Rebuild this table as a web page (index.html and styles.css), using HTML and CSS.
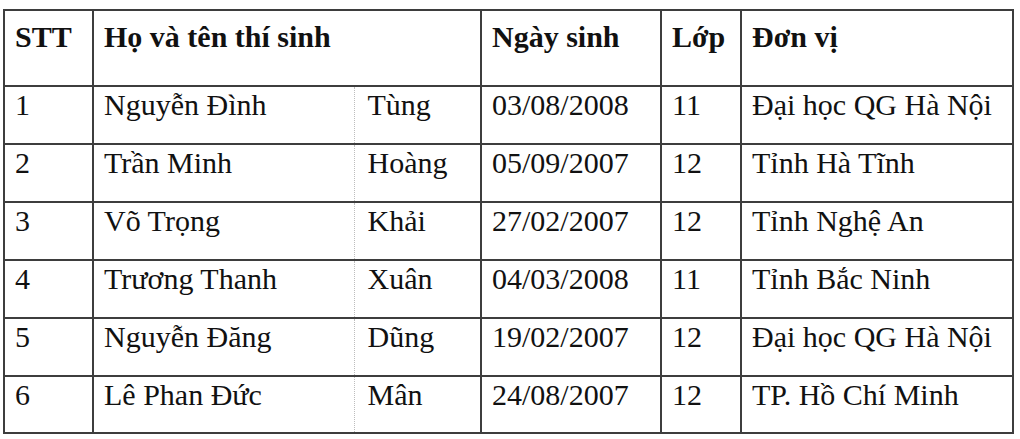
FILE: index.html
```html
<!DOCTYPE html>
<html lang="vi">
<head>
<meta charset="utf-8">
<title>Danh sách thí sinh</title>
<link rel="stylesheet" href="styles.css">
</head>
<body>
<table class="list">
  <colgroup>
    <col class="c-stt">
    <col class="c-ho">
    <col class="c-ten">
    <col class="c-ngay">
    <col class="c-lop">
    <col class="c-dv">
  </colgroup>
  <thead>
    <tr class="head">
      <th>STT</th>
      <th colspan="2">Họ và tên thí sinh</th>
      <th>Ngày sinh</th>
      <th>Lớp</th>
      <th>Đơn vị</th>
    </tr>
  </thead>
  <tbody>
    <tr><td>1</td><td>Nguyễn Đình</td><td class="ten">Tùng</td><td>03/08/2008</td><td>11</td><td>Đại học QG Hà Nội</td></tr>
    <tr><td>2</td><td>Trần Minh</td><td class="ten">Hoàng</td><td>05/09/2007</td><td>12</td><td>Tỉnh Hà Tĩnh</td></tr>
    <tr><td>3</td><td>Võ Trọng</td><td class="ten">Khải</td><td>27/02/2007</td><td>12</td><td>Tỉnh Nghệ An</td></tr>
    <tr><td>4</td><td>Trương Thanh</td><td class="ten">Xuân</td><td>04/03/2008</td><td>11</td><td>Tỉnh Bắc Ninh</td></tr>
    <tr><td>5</td><td>Nguyễn Đăng</td><td class="ten">Dũng</td><td>19/02/2007</td><td>12</td><td>Đại học QG Hà Nội</td></tr>
    <tr class="last"><td>6</td><td>Lê Phan Đức</td><td class="ten">Mân</td><td>24/08/2007</td><td>12</td><td>TP. Hồ Chí Minh</td></tr>
  </tbody>
</table>
</body>
</html>
```
FILE: styles.css
```css
html, body {
  margin: 0;
  padding: 0;
  background: #ffffff;
}
body {
  padding: 9px 0 0 3px;
  font-family: "Liberation Serif", "Times New Roman", serif;
  color: #111111;
}
.list {
  border-collapse: collapse;
  table-layout: fixed;
  width: 1011px;
  font-size: 30px;
}
.c-stt { width: 89px; }
.c-ho { width: 261px; }
.c-ten { width: 127px; }
.c-ngay { width: 180px; }
.c-lop { width: 80px; }
.c-dv { width: 272px; }

.list th,
.list td {
  border: 2px solid #3d3d3d;
  text-align: left;
  vertical-align: top;
  padding: 0 0 0 10px;
  white-space: nowrap;
  line-height: 34px;
}
.list th {
  font-weight: bold;
  padding-top: 9px;
}
.list td {
  padding-top: 1px;
}
.head { height: 76px; }
.list tbody tr { height: 58px; }
.list tbody tr.last { height: 57px; }

.list td:nth-child(2) { border-right: none; }
.list td.ten {
  border-left: 1px dotted #bdbdbd;
  padding-left: 13px;
}
```
